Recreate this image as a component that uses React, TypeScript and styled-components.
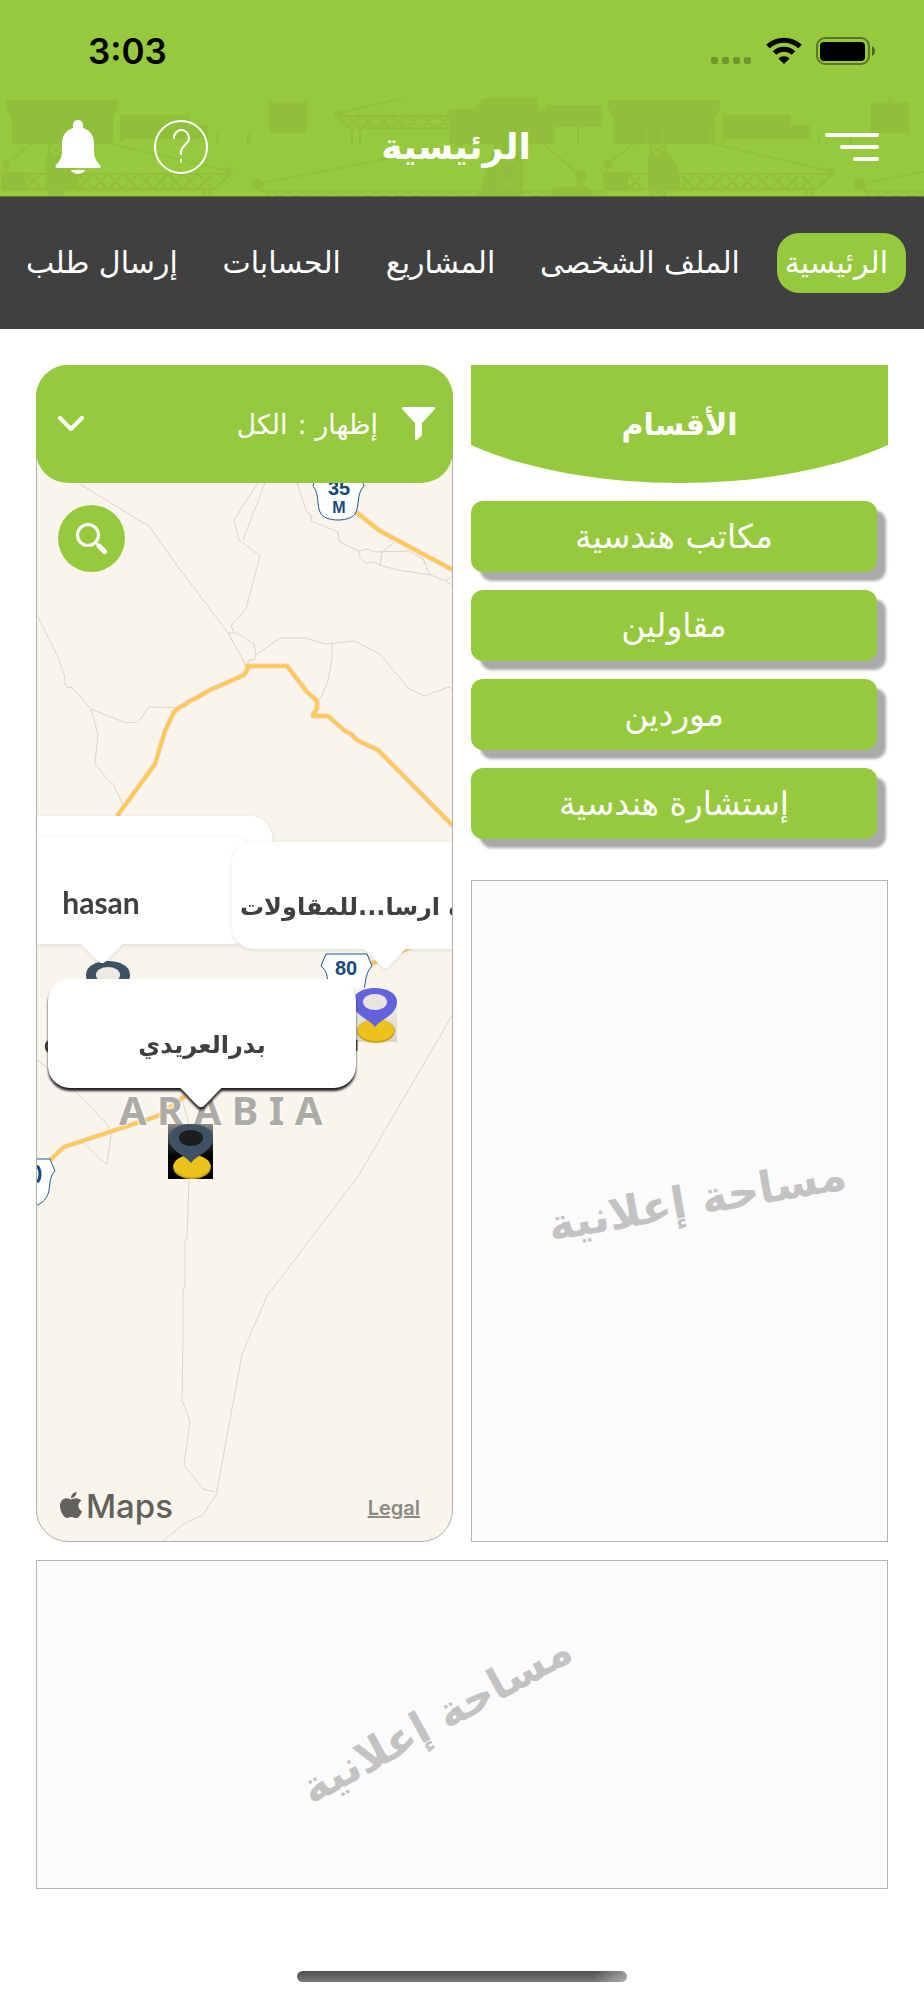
import React from 'react';
import styled, { createGlobalStyle } from 'styled-components';
import { FaApple } from 'react-icons/fa';

const GREEN = '#96c93d';
const TINT = '#8fbf3b';
const ARABIC = '"DejaVu Sans", sans-serif';
const LATIN = 'Inter, "Liberation Sans", sans-serif';

const GlobalStyle = createGlobalStyle`
  *, *::before, *::after { box-sizing: border-box; }
  body { margin: 0; background: #fff; font-family: ${ARABIC}; }
  button, select { font: inherit; color: inherit; border: 0; background: none; padding: 0; margin: 0; cursor: pointer; }
  h1, h2, p { margin: 0; font-weight: 400; }
  svg { display: block; }
`;

const Page = styled.div`
  min-height: 100vh;
  display: flex;
  flex-direction: column;
`;

const StatusBar = styled.div`
  height: 98px;
  padding: 4px 48px 0 88px;
  display: flex;
  align-items: center;
  justify-content: space-between;
  background: ${GREEN};
`;

const Clock = styled.time`
  font: 600 35px/40px ${LATIN};
  color: #000;
`;

const StatusIcons = styled.div`
  display: flex;
  align-items: center;
  gap: 14px;
`;

const Header = styled.header`
  position: relative;
  height: 98px;
  padding: 0 45px 0 33px;
  display: grid;
  grid-template-columns: 1fr auto 1fr;
  align-items: center;
  background: ${GREEN};
  color: #fff;
`;

const Skyline = styled.svg`
  position: absolute;
  inset: 0;
  width: 100%;
  height: 100%;
`;

const HeaderSide = styled.div<{ $end?: boolean }>`
  position: relative;
  display: flex;
  justify-content: ${(p) => (p.$end ? 'flex-end' : 'flex-start')};
  gap: 31px;
`;

const IconButton = styled.button<{ $width: number }>`
  width: ${(p) => p.$width}px;
  height: 56px;
  display: flex;
  align-items: center;
  justify-content: center;
`;

const Title = styled.h1`
  position: relative;
  font-size: 36px;
  line-height: 48px;
  font-weight: 700;
`;

const Nav = styled.nav`
  height: 133px;
  padding: 0 18px;
  display: flex;
  align-items: center;
  justify-content: space-between;
  background: #404040;
  border-top: 1px solid #5f7a35;
`;

const NavLink = styled.a<{ $active?: boolean }>`
  padding: 0 18px 0 8px;
  border-radius: 22px;
  font-size: 30px;
  line-height: 60px;
  white-space: nowrap;
  color: #fff;
  text-decoration: none;
  background: ${(p) => (p.$active ? GREEN : 'transparent')};
`;

const Main = styled.main`
  flex: 1;
  padding: 36px 36px 0;
  display: flex;
  flex-direction: column;
  gap: 18px;
`;

const Columns = styled.div`
  display: grid;
  grid-template-columns: 1fr 1fr;
  gap: 18px;
`;

const Sections = styled.section`
  display: flex;
  flex-direction: column;
  gap: 18px;
`;

const SectionsTitle = styled.h2`
  height: 118px;
  display: flex;
  align-items: center;
  justify-content: center;
  background: ${GREEN};
  clip-path: ellipse(68% 100% at 50% 0%);
  color: #fff;
  font-size: 30px;
  font-weight: 700;
`;

const SectionButton = styled.button`
  height: 71px;
  margin-right: 11px;
  border-radius: 12px;
  background: ${GREEN};
  box-shadow: 9px 9px 3px #aaa;
  color: #fff;
  font-size: 33px;
`;

const AdSpace = styled.aside<{ $height: number; $tilt: number; $size: number }>`
  height: ${(p) => p.$height}px;
  display: flex;
  align-items: center;
  justify-content: center;
  border: 1px solid #b5b5b5;
  background: #fbfbfb;
  color: #c3c3c3;

  p {
    font-size: ${(p) => p.$size}px;
    font-weight: 700;
    white-space: nowrap;
    transform: rotate(${(p) => p.$tilt}deg);
  }
`;

const SideAd = styled(AdSpace)`
  margin-top: 23px;
  padding: 0 0 24px 34px;
`;

const WideAd = styled(AdSpace)`
  padding: 0 52px 12px 0;
`;

const MapCard = styled.section`
  position: relative;
  display: flex;
  flex-direction: column;
`;

const MapCanvas = styled.div`
  position: absolute;
  inset: 0;
  overflow: hidden;
  border: 1px solid #b0b0b0;
  border-radius: 32px;
  background: #f9f5ed;
`;

const MapLayer = styled.svg`
  position: absolute;
  inset: 0;
  width: 100%;
  height: 100%;
`;

const RegionLabel = styled.span`
  position: absolute;
  left: 82px;
  top: 718px;
  font: 700 40px/52px "Noto Sans", sans-serif;
  white-space: nowrap;
  color: #adaba6;
  text-shadow: 0 0 3px #fff, 0 0 3px #fff;
`;

const Callout = styled.div<{ $x: number; $y: number; $w: number; $dark?: boolean; $start?: boolean }>`
  position: absolute;
  left: ${(p) => p.$x}px;
  top: ${(p) => p.$y}px;
  width: ${(p) => p.$w}px;
  height: ${(p) => (p.$dark ? 109 : 107)}px;
  padding: 22px 8px 0;
  display: flex;
  align-items: center;
  justify-content: ${(p) => (p.$start ? 'flex-start' : 'center')};
  border-radius: 22px;
  background: #fff;
  color: #404040;
  font-size: 24px;
  font-weight: 700;
  white-space: nowrap;
  filter: ${(p) =>
    p.$dark
      ? 'drop-shadow(0 3px 1px #222)'
      : 'drop-shadow(0 1px 2px rgba(0, 0, 0, 0.1))'};
`;

const CalloutTail = styled.svg<{ $x: number }>`
  position: absolute;
  left: ${(p) => p.$x}px;
  top: 100%;
  margin-top: -1px;
`;

const LatinName = styled.span`
  font-family: Lato, sans-serif;
  font-size: 30px;
  line-height: 32px;
`;

const Filter = styled.div`
  position: relative;
  height: 118px;
  padding: 0 18px 0 22px;
  display: flex;
  align-items: center;
  border-radius: 32px;
  background: ${GREEN};
  color: #fff;
  font-size: 27px;

  label { margin-right: 24px; white-space: nowrap; }
  select {
    flex: 1;
    min-width: 0;
    height: 60px;
    margin-right: 10px;
    appearance: none;
    outline: 0;
  }
  option { color: #404040; }
`;

const SearchButton = styled.button`
  position: relative;
  width: 67px;
  height: 67px;
  margin: 22px;
  display: flex;
  align-items: center;
  justify-content: center;
  border-radius: 50%;
  background: ${GREEN};
`;

const Attribution = styled.div`
  position: relative;
  margin-top: auto;
  padding: 0 33px 14px 20px;
  display: flex;
  align-items: center;
  justify-content: space-between;
  font-family: ${LATIN};
`;

const MapsBrand = styled.span`
  display: flex;
  align-items: center;
  color: #62615d;
  font-size: 33px;
  line-height: 44px;
  font-weight: 500;

  svg { margin-bottom: 3px; }
`;

const LegalLink = styled.a`
  padding-top: 4px;
  color: #8b8984;
  font-size: 20px;
  font-weight: 600;
`;

const HomeArea = styled.footer`
  padding: 82px 0 18px;
  display: flex;
  justify-content: center;

  span {
    width: 330px;
    height: 11px;
    border-radius: 6px;
    background: linear-gradient(90deg, transparent 90%, rgba(255, 255, 255, 0.4)),
      linear-gradient(#505050, #7a7a7a);
  }
`;

const Truss = ({ x, y, n, h }: { x: number; y: number; n: number; h: number }) => (
  <path
    d={Array.from({ length: n }, (_, i) => `M${x + i * 15} ${y}l15 ${h}M${x + i * 15} ${y + h}l15 -${h}`).join('')}
    strokeWidth="2"
  />
);

const CraneSkyline = () => (
  <Skyline aria-hidden="true">
    <defs>
      <pattern id="cranes" width="602" height="98" patternUnits="userSpaceOnUse">
        <g fill={TINT} stroke="none">
          <path d="M6 2h112v8l-5 10v26H12V20L6 10zM120 17h69v10h19v14h-85v3h-3zM216 35h2v11h-2zM247 35h3v11h-3zM269 4h38v31h-38zM287 0h2v4h-2z" />
          <path d="M449 11h37l-11 0 8-11h55v11h22v9l-6 8v18H449zM546 7h57v22h-57zM577 29h2v17h-2zM553 89h37v9h-37zM478 98l17-52h28v52z" />
          <path d="M1 74h25v19H1zM46 57h23l9 18v16H46z" />
          <circle cx="6" cy="66" r="4" />
          <circle cx="229" cy="73" r="4" />
          <circle cx="258" cy="86" r="6" />
          <circle cx="338" cy="15" r="4" />
          <circle cx="581" cy="78" r="6" />
        </g>
        <g fill="none" stroke={TINT} strokeWidth="2">
          <path d="M6 75V66L32 46M111 46L229 73M229 76H26M26 91H215L230 76M204 91v7M210 91v7M49 46v52M63 46v52M49 46l14 11M63 46l-14 11M49 98l14-7M63 98l-14-7" />
          <path d="M258 86L462 46M258 86l5 7H602M265 94l6 6M338 15L404 0M338 18H450M338 18l10 12H452M352 30v16M360 30v16M543 46L581 78V90" />
          <Truss x={26} y={76} n={1} h={15} />
          <Truss x={78} y={76} n={9} h={15} />
          <Truss x={346} y={18} n={7} h={12} />
          <Truss x={272} y={93} n={22} h={12} />
        </g>
        <g stroke={GREEN} strokeWidth="2" fill="none" opacity="0.7">
          <path d="M498 50l22 20M520 50l-22 20M498 76l22 20M520 76l-22 20" />
        </g>
        <g fill="#8bbb39" opacity="0.5">
          <path d="M16 28h8v18h-8zM30 28h12v18H30zM48 28h10v18H48zM64 28h12v18H64zM94 28h11v18H94z" />
        </g>
      </pattern>
    </defs>
    <rect width="100%" height="100%" fill="url(#cranes)" />
  </Skyline>
);

const MinorRoads = [
  'M80 484L150 527 173 560 228 633 247 667',
  'M258 483L234 520 239 540 260 556 246 609 231 626 234 632',
  'M228 633h9l17 11 2 11-2 5h-5l-2 5',
  'M265 483L243 540',
  'M297 483L307 512 311 515V521L338 532 339 541 350 547 359 551V555L365 563 375 562 379 565 398 570 431 575 446 581 453 586',
  'M359 551L368 549 375 552 409 551 423 559 430 575M382 552L396 541M382 552L380 565M453 575L446 581',
  'M36 613L57 655 65 677 64 682 67 687 73 688 91 709 98 734 95 763 107 779 113 784 123 805',
  'M91 709L126 723 138 722 149 707 178 708',
  'M256 655L280 638H305L325 644 355 641 380 654 408 688 424 696 449 687 453 690M332 644V658L328 680 322 696 318 700',
  'M36 1059L75 1091 107 1124 111 1136 107 1164 102 1161 83 1142',
  'M453 1014L357 1178 340 1200 267 1296 242 1354 218 1485 216 1495 203 1515 185 1523 163 1541',
  'M182 1100L188 1120 189 1180 187 1239 185 1240V1287L183 1288V1335L182 1400 190 1421 184 1465 203 1489 215 1492',
];

const MajorRoads = [
  'M117 816L155 764 165 731 174 712 180 707 186 704 188 702 198 697 210 690 244 675 248 668 247 666H287L307 692 317 701V709L313 714V716H328L345 731 351 734 357 740 363 743 378 750 453 826',
  'M356 512L380 531 453 570',
  'M50 1160L64 1147 158 1116 185 1096M368 965L411 947',
];

const Pin = ({ x, y, color, hole }: { x: number; y: number; color: string; hole: string }) => (
  <g transform={`translate(${x} ${y})`}>
    <ellipse cx="1" cy="43" rx="19" ry="12" fill="#c9a41c" />
    <ellipse cx="1" cy="42" rx="18" ry="11" fill="#ecc31a" />
    <path d="M0 39C-6 31-22 27-22 14-22 5-12 0 0 0s22 5 22 14c0 13-16 17-22 25z" fill={color} />
    <ellipse cx="0" cy="14" rx="12" ry="8" fill={hole} />
  </g>
);

const MapDrawing = () => (
  <MapLayer viewBox="37 366 415 1175" preserveAspectRatio="xMinYMin slice" aria-hidden="true">
    <g fill="none" stroke="#d8d5ce" strokeWidth="1">
      {MinorRoads.map((d) => <path key={d} d={d} />)}
    </g>
    <g fill="none" strokeLinejoin="round">
      {MajorRoads.map((d) => <path key={d} d={d} stroke="#f3cdb4" strokeWidth="5" />)}
      {MajorRoads.map((d) => <path key={d} d={d} stroke="#ffcb4d" strokeWidth="3" />)}
    </g>
    <g fill="#fff" stroke="#1d5796" strokeWidth="1">
      <path d="M318 470h41l5 16c-8 8-4 20-9 28-6 8-28 8-34 0-5-8-1-20-8-28z" />
      <path d="M326 954h41l5 12c-8 8-6 20-9 28-6 12-28 12-34 0-3-8 2-20-8-28z" />
      <path d="M7 1159h43l5 12c-8 8-3 18-9 27-8 12-30 12-36 0z" />
    </g>
    <g fill="#17497b" fontFamily='"Liberation Sans", sans-serif' fontWeight="700" textAnchor="middle">
      <text x="339" y="495" fontSize="20">35</text>
      <text x="339" y="513" fontSize="16">M</text>
      <text x="346" y="975" fontSize="20">80</text>
    </g>
    <path d="M37 1166c4 3 4 13 0 16" fill="none" stroke="#17497b" strokeWidth="3" />
  </MapLayer>
);

const PinLayer = () => (
  <MapLayer viewBox="37 366 415 1175" preserveAspectRatio="xMinYMin slice" aria-hidden="true">
    <defs>
      <linearGradient id="plate" x2="0" y2="1">
        <stop offset="0" stopColor="#8d8b88" />
        <stop offset="0.4" stopColor="#222" />
        <stop offset="0.6" stopColor="#000" />
      </linearGradient>
      <linearGradient id="haze" x2="0" y2="1">
        <stop offset="0" stopColor="#f9f5ed" />
        <stop offset="1" stopColor="#d9d5ce" />
      </linearGradient>
    </defs>
    <Pin x={108} y={961} color="#3f5265" hole="#eeeae3" />
    <rect x="353" y="988" width="44" height="54" fill="url(#haze)" />
    <Pin x={375} y={988} color="#6462de" hole="#e9e5de" />
    <rect x="168" y="1124" width="45" height="55" fill="url(#plate)" />
    <Pin x={191} y={1124} color="#3f5265" hole="#1d1d1d" />
    <path d="M50 1041c-5 2-5 9 0 11M356 1040v11" fill="none" stroke="#404040" strokeWidth="3" />
  </MapLayer>
);

const Tail = ({ x }: { x: number }) => (
  <CalloutTail $x={x} width="48" height="22" viewBox="0 0 48 22" aria-hidden="true">
    <path d="M0 0c4 0 6 4 20 18 3 3 5 3 8 0C42 4 44 0 48 0z" fill="#fff" />
  </CalloutTail>
);

const navItems = ['الرئيسية', 'الملف الشخصى', 'المشاريع', 'الحسابات', 'إرسال طلب'];
const sections = ['مكاتب هندسية', 'مقاولين', 'موردين', 'إستشارة هندسية'];

export default function App() {
  return (
    <Page>
      <GlobalStyle />
      <StatusBar>
        <Clock>3:03</Clock>
        <StatusIcons>
          <svg width="41" height="28" viewBox="0 0 41 28" fill="#000" fillOpacity="0.25" aria-hidden="true">
            {[0, 11, 22, 33].map((x) => <rect key={x} x={x} y="20" width="7" height="7" rx="2" />)}
          </svg>
          <svg width="36" height="28" viewBox="0 0 36 28" aria-hidden="true">
            <path d="M2 9.500C11 1 25 1 34 9.500M8.500 16C14 11 22 11 27.500 16" fill="none" stroke="#000" strokeWidth="5" />
            <path d="M12.500 21.500c3-3 8-3 11 0L18 27z" fill="#000" />
          </svg>
          <svg width="60" height="28" viewBox="0 0 60 28" aria-hidden="true">
            <rect x="1" y="1" width="52" height="26" rx="8" fill="none" stroke="#000" strokeOpacity="0.4" strokeWidth="2" />
            <rect x="4" y="5" width="45" height="19" rx="4" fill="#000" />
            <path d="M56 9c4 2 4 8 0 10z" fill="#000" fillOpacity="0.5" />
          </svg>
        </StatusIcons>
      </StatusBar>

      <Header>
        <CraneSkyline />
        <HeaderSide>
          <IconButton $width={90} aria-label="الإشعارات">
            <svg width="46" height="54" viewBox="0 0 46 54" fill="#fff">
              <path d="M23 0c3 0 5 2 5 5v3c7 2 11 8 11 15v8c0 6 2 10 6 14 1 1 1 3-1 3H2c-2 0-2-2-1-3 4-4 6-8 6-14v-8C7 16 11 10 18 8V5c0-3 2-5 5-5zM16 50h14c-1 5-13 5-14 0z" />
            </svg>
          </IconButton>
          <IconButton $width={54} aria-label="المساعدة">
            <svg width="54" height="54" viewBox="0 0 54 54" fill="none" stroke="#fff" strokeWidth="2" strokeLinecap="round">
              <circle cx="27" cy="27" r="26" />
              <path d="M20 18c0-4 3-8 7-8s8 3 8 8c0 7-8 7-8 14v2M27 39.500v2" />
            </svg>
          </IconButton>
        </HeaderSide>
        <Title>الرئيسية</Title>
        <HeaderSide $end>
          <IconButton $width={54} aria-label="القائمة">
            <svg width="54" height="28" viewBox="0 0 54 28" stroke="#fff" strokeWidth="4" strokeLinecap="round">
              <path d="M2 2H52M17 14H52M30 26H52" />
            </svg>
          </IconButton>
        </HeaderSide>
      </Header>

      <Nav dir="rtl">
        {navItems.map((item, i) => (
          <NavLink key={item} href="#" $active={i === 0}>{item}</NavLink>
        ))}
      </Nav>

      <Main>
        <Columns>
          <MapCard>
            <MapCanvas>
              <MapDrawing />
              <RegionLabel>A R A B I A</RegionLabel>
              <PinLayer />
              <Callout $x={-100} $y={450} $w={335} />
              <Callout $x={-90} $y={471} $w={308}>
                <LatinName>hasan</LatinName>
                <Tail x={131} />
              </Callout>
              <Callout $x={195} $y={476} $w={308} $start>
                <span dir="rtl">ة ارسا...للمقاولات</span>
                <Tail x={129} />
              </Callout>
              <Callout $x={11} $y={613} $w={308} $dark>
                <span dir="rtl">بدرالعريدي</span>
                <Tail x={129} />
              </Callout>
            </MapCanvas>

            <Filter dir="rtl">
              <svg width="33" height="34" viewBox="0 0 33 34" fill="#fff" aria-hidden="true">
                <path d="M1 0h31c1 0 1 2 1 2L20 16v12l-5 5c-1 1-2 0-2-1V16L0 2s0-2 1-2z" />
              </svg>
              <label htmlFor="filter">إظهار :</label>
              <select id="filter" defaultValue="all">
                <option value="all">الكل</option>
              </select>
              <svg width="26" height="16" viewBox="0 0 26 16" fill="none" stroke="#fff" strokeWidth="4" strokeLinecap="round" strokeLinejoin="round" aria-hidden="true">
                <path d="M2 2l11 11L24 2" />
              </svg>
            </Filter>
            <SearchButton aria-label="بحث">
              <svg width="32" height="32" viewBox="0 0 32 32" fill="none" stroke="#fff" strokeLinecap="round" aria-hidden="true">
                <circle cx="12" cy="12" r="10.500" strokeWidth="3" />
                <path d="M19.500 19.500l2 2" strokeWidth="2" />
                <path d="M23 23l5.500 5.500" strokeWidth="5" />
              </svg>
            </SearchButton>
            <Attribution>
              <MapsBrand><FaApple size={30} aria-hidden="true" />Maps</MapsBrand>
              <LegalLink href="#">Legal</LegalLink>
            </Attribution>
          </MapCard>

          <Sections dir="rtl">
            <SectionsTitle>الأقسام</SectionsTitle>
            {sections.map((name) => (
              <SectionButton key={name}>{name}</SectionButton>
            ))}
            <SideAd $height={662} $tilt={-10} $size={44}>
              <p>مساحة إعلانية</p>
            </SideAd>
          </Sections>
        </Columns>

        <WideAd $height={329} $tilt={-29} $size={44} dir="rtl">
          <p>مساحة إعلانية</p>
        </WideAd>
      </Main>

      <HomeArea><span /></HomeArea>
    </Page>
  );
}
